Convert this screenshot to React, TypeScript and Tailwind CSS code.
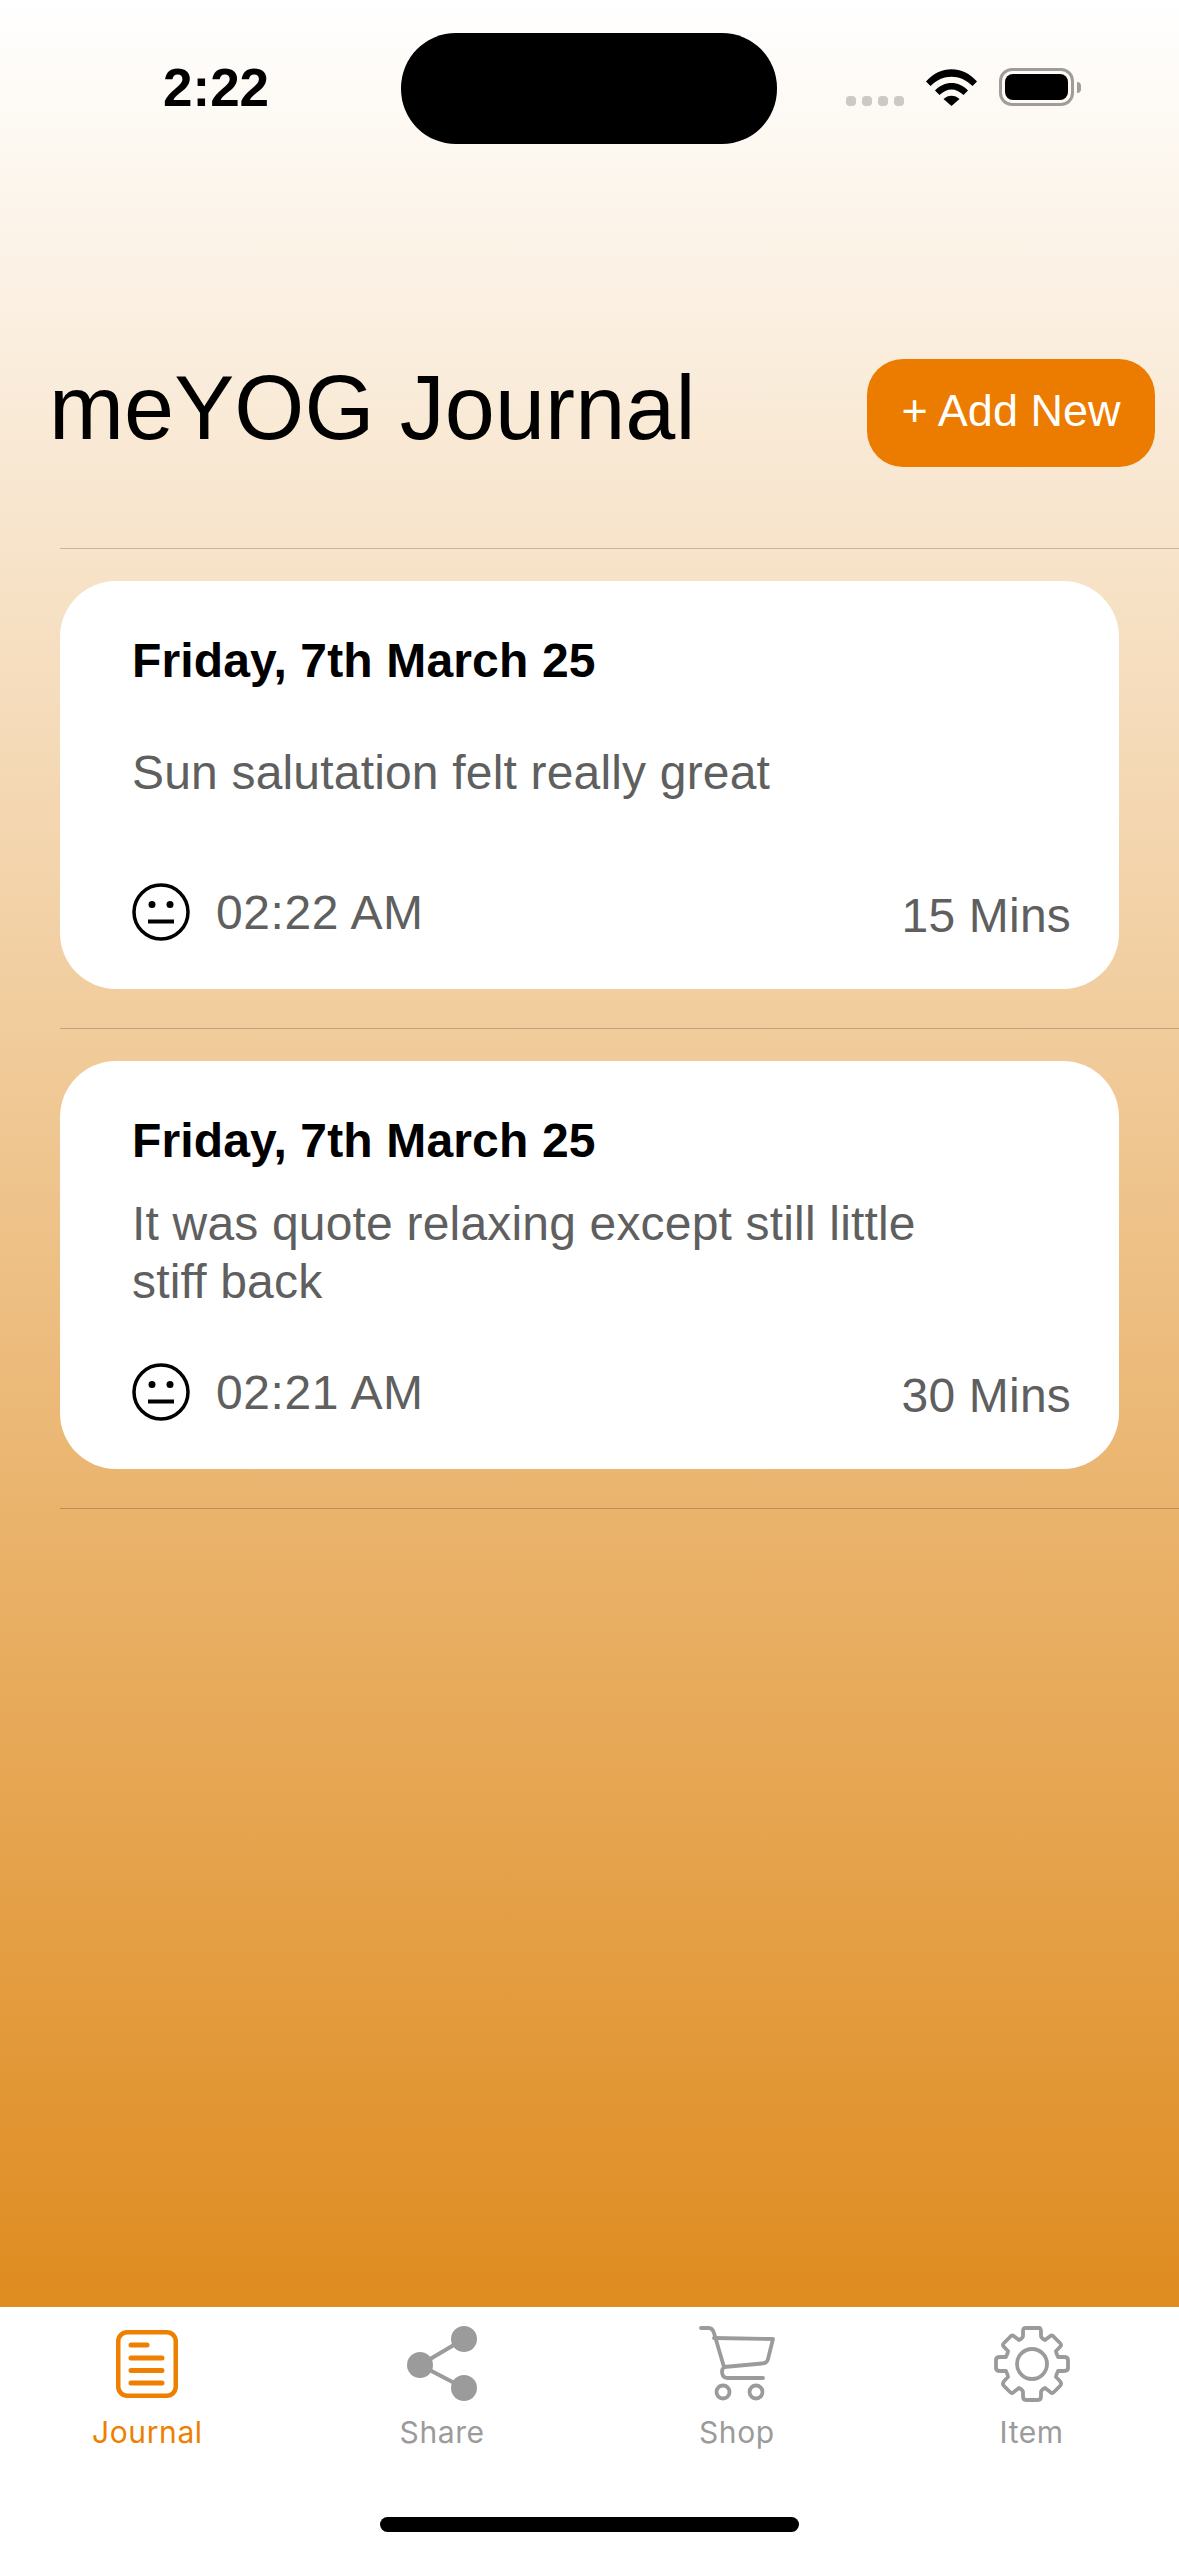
const sans = "font-['Liberation_Sans',Arial,sans-serif]";

const entries = [
	{ date: "Friday, 7th March 25", note: "Sun salutation felt really great", time: "02:22 AM", mins: "15 Mins" },
	{ date: "Friday, 7th March 25", note: "It was quote relaxing except still little stiff back", time: "02:21 AM", mins: "30 Mins" },
];

const FaceIcon = () => (
	<svg width="58" height="58" viewBox="0 0 58 58" fill="none" stroke="#000" strokeWidth="3.500">
		<circle cx="29" cy="29" r="27" />
		<circle cx="20" cy="21.500" r="3.500" fill="#000" stroke="none" />
		<circle cx="38" cy="21.500" r="3.500" fill="#000" stroke="none" />
		<path d="M16 38.500H42" strokeWidth="4" />
	</svg>
);

const WifiIcon = () => (
	<svg width="51" height="37" viewBox="0 0 51 37" fill="#000">
		<path d="M0 12.500C14 -4 37 -4 51 12.500L46.500 17C34.500 4.500 16.500 4.500 4.500 17Z" />
		<path d="M9 21.500C18 11.500 33 11.500 42 21.500L37.500 26C30 18.500 21 18.500 13.500 26Z" />
		<path d="M17.500 30C22 25.500 29 25.500 33.500 30L25.500 37Z" />
	</svg>
);

const JournalIcon = () => (
	<svg width="62" height="68" viewBox="0 0 62 68" fill="none" stroke="#ee7f00" strokeWidth="4.500" strokeLinecap="round">
		<rect x="2.250" y="2.250" width="57.500" height="63.500" rx="9" />
		<path d="M15 15H31M15 28H46M15 40.500H46M15 53H46" strokeWidth="5" />
	</svg>
);

const ShareIcon = () => (
	<svg width="70" height="76" viewBox="0 0 70 76" fill="#9b9b9b" stroke="#9b9b9b">
		<path d="M13 39L57 13M13 39L57 62" strokeWidth="4" />
		<circle cx="57" cy="13" r="13" stroke="none" />
		<circle cx="13" cy="39" r="13" stroke="none" />
		<circle cx="57" cy="62" r="13" stroke="none" />
	</svg>
);

const CartIcon = () => (
	<svg width="76" height="76" viewBox="0 0 76 76" fill="none" stroke="#9b9b9b" strokeWidth="3.800" strokeLinecap="round" strokeLinejoin="round">
		<path d="M2 2H10C13 2 14 4 15 7L25 41C22 44 22 52 29 52H64" />
		<path d="M15 12L74 13L69 33C68 37 66 37 63 37.500L25 41" />
		<circle cx="24" cy="66" r="6.500" />
		<circle cx="57" cy="66" r="6.500" />
	</svg>
);

const GearIcon = () => (
	<svg width="76" height="76" viewBox="0 0 76 76" fill="none" stroke="#9b9b9b" strokeWidth="3.800" strokeLinejoin="round">
		<path d="M31 2H45C47 2 47 4 47 6V10C47 12 49 13 51 14L55 11C57 9 59 9 60 11L66 17C68 19 67 20 65 22L62 25C62 27 63 29 64 31H70C73 31 74 32 74 34V42C74 44 73 45 70 45H64C63 47 62 49 62 51L65 54C67 56 68 58 66 60L60 66C58 68 57 67 55 65L51 62C49 63 47 64 47 66V70C47 73 46 74 44 74H32C30 74 29 73 29 70V66C29 64 27 63 25 62L21 65C19 67 18 68 16 66L10 60C8 58 9 56 11 54L14 51C14 49 13 47 12 45H6C3 45 2 44 2 42V34C2 32 3 31 6 31H12C13 29 14 27 14 25L11 22C9 20 8 19 10 17L16 11C17 9 19 9 21 11L25 14C27 13 29 12 29 10V6C29 4 29 2 31 2Z" />
		<circle cx="38" cy="38" r="15" />
	</svg>
);

const tabs = [
	{ label: "Journal", icon: <JournalIcon />, active: true },
	{ label: "Share", icon: <ShareIcon />, active: false },
	{ label: "Shop", icon: <CartIcon />, active: false },
	{ label: "Item", icon: <GearIcon />, active: false },
];

export default function App() {
	return (
		<div className={`w-[1179px] h-[2556px] flex flex-col overflow-hidden bg-white ${sans}`}>
			<div className="flex-1 flex flex-col bg-linear-to-b/srgb from-white to-[#df8c20]">
				<div className="flex items-start pt-[33px] h-[144px]">
					<span className="w-[401px] pl-[163px] pt-[24px] text-[53px] leading-[61px] font-bold text-black">2:22</span>
					<div className="w-[376px] h-[111px] rounded-[55px] bg-black" />
					<div className="flex items-end ml-[69px] mt-[35px]">
						<div className="flex gap-[6px]">
							<span className="w-[10px] h-[10px] rounded-[4px] bg-[#cbc8c5]" />
							<span className="w-[10px] h-[10px] rounded-[4px] bg-[#cbc8c5]" />
							<span className="w-[10px] h-[10px] rounded-[4px] bg-[#cbc8c5]" />
							<span className="w-[10px] h-[10px] rounded-[4px] bg-[#cbc8c5]" />
						</div>
						<div className="ml-[22px]">
							<WifiIcon />
						</div>
						<div className="ml-[22px] flex items-center">
							<div className="w-[75px] h-[38px] rounded-[13px] border-[3px] border-[#a09d99] p-[3px]">
								<div className="w-full h-full rounded-[8px] bg-black" />
							</div>
							<div className="ml-[3px] w-[4px] h-[11px] rounded-r-[4px] bg-[#a09d99]" />
						</div>
					</div>
				</div>

				<div className="flex items-start justify-between pl-[49px] pr-[24px] mt-[215px]">
					<h1 className="text-[90px] leading-[98px] tracking-[0.1px] font-normal text-black">meYOG Journal</h1>
					<button className="w-[288px] h-[108px] pb-[4px] rounded-[36px] bg-[#ec7c00] text-[45px] leading-[54px] text-white">+ Add New</button>
				</div>

				<div className="ml-[60px] mt-[81px] flex flex-col">
					<div className="h-px bg-black/20" />
					{entries.map((entry, i) => (
						<div key={i} className="flex flex-col">
							<div className="w-[1059px] h-[408px] mt-[32px] rounded-[56px] bg-white pl-[72px] pr-[48px] pt-[52px]">
								<p className="text-[48px] leading-[56px] tracking-[0.15px] font-bold text-black">{entry.date}</p>
								<div className="h-[116px] mt-[26px] flex items-center">
									<p className="w-[800px] text-[48px] leading-[58px] tracking-[0.18px] text-[#5f5f5f]">{entry.note}</p>
								</div>
								<div className="flex items-start justify-between mt-[52px]">
									<div className="flex items-center gap-[26px]">
										<FaceIcon />
										<span className="pt-[2px] text-[48px] leading-[56px] tracking-[0.6px] text-[#5f5f5f]">{entry.time}</span>
									</div>
									<span className="pt-[4px] text-[48px] leading-[58px] tracking-[0.2px] text-[#5f5f5f]">{entry.mins}</span>
								</div>
							</div>
							<div className="h-px mt-[39px] bg-black/20" />
						</div>
					))}
				</div>
			</div>

			<div className="h-[249px] flex flex-col bg-white">
				<div className="grid grid-cols-4 pt-[19px]">
					{tabs.map((tab) => (
						<div key={tab.label} className="flex flex-col items-center">
							<div className="h-[76px] flex items-center">{tab.icon}</div>
							<span className={`mt-[12px] font-['Inter',sans-serif] text-[30px] leading-[36px] tracking-[0.6px] ${tab.active ? "text-[#ee7f00]" : "text-[#9b9b9b]"}`}>
								{tab.label}
							</span>
						</div>
					))}
				</div>
				<div className="mt-[67px] mx-auto w-[419px] h-[15px] rounded-full bg-black" />
			</div>
		</div>
	);
}
